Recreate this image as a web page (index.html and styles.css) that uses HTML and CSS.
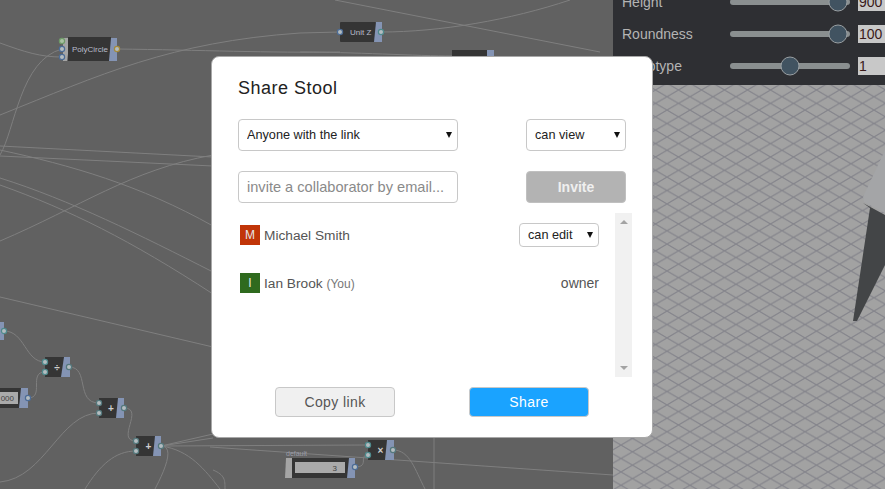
FILE: index.html
```html
<!DOCTYPE html>
<html lang="en">
<head>
<meta charset="utf-8">
<title>Share Stool</title>
<link rel="stylesheet" href="styles.css">
</head>
<body>
<div class="app">
  <main class="graph">
    <svg class="graph-svg" width="613" height="489" viewBox="0 0 613 489">
      <g class="wires">
        <path d="M0 43C25 52 40 57 62 57"/>
        <path d="M0 155C15 130 20 60 62 49"/>
        <path d="M117 49C200 50 270 53 340 52"/>
        <path d="M0 115C100 75 170 42 300 33L340 32"/>
        <path d="M0 146L213 157"/>
        <path d="M0 156L213 166"/>
        <path d="M0 150C70 165 140 185 213 226"/>
        <path d="M0 178C70 200 140 235 213 272"/>
        <path d="M0 185C70 210 130 240 213 294"/>
        <path d="M0 241C80 207 130 170 213 155"/>
        <path d="M381 32C440 32 510 20 570 0"/>
        <path d="M335 0L600 52"/>
        <path d="M300 52C350 52 420 56 452 56"/>
        <path d="M0 297L213 347"/>
        <path d="M4 331C25 331 25 362 45 362"/>
        <path d="M28 398C45 398 28 372 45 372"/>
        <path d="M69 367C90 367 75 403 99 403"/>
        <path d="M124 408C145 408 115 441 136 441"/>
        <path d="M0 482C45 478 60 413 99 413"/>
        <path d="M85 489C100 465 115 451 136 451"/>
        <path d="M161 446L213 434"/>
        <path d="M161 446L213 438"/>
        <path d="M161 446L368 445"/>
        <path d="M161 446C175 446 165 470 155 489"/>
        <path d="M161 446C190 450 205 470 220 489"/>
        <path d="M210 447L613 475"/>
        <path d="M355 467C370 467 358 455 368 455"/>
        <path d="M393 450C410 450 415 470 425 489"/>
        <path d="M434 438V489"/>
        <path d="M213 470C225 475 225 480 225 489"/>
      </g>

      <g class="node">
        <path class="node-in" d="M63 38H70L67 61H63Z"/>
        <rect class="node-body" x="68" y="37" width="43" height="24"/>
        <path class="node-out" d="M111 38H117V61H109Z"/>
        <text class="node-label" x="72" y="52">PolyCircle</text>
        <circle class="port port-green" cx="62" cy="41" r="2.2"/>
        <circle class="port port-blue" cx="62" cy="49" r="2.2"/>
        <circle class="port port-blue" cx="62" cy="57" r="2.2"/>
        <circle class="port port-gold" cx="117" cy="49" r="2.2"/>
      </g>

      <g class="node">
        <rect class="node-body" x="340" y="22" width="36" height="20" rx="1"/>
        <path class="node-out" d="M376 22H382V42H374Z"/>
        <text class="node-label" x="350" y="35">Unit Z</text>
        <circle class="port port-blue" cx="340" cy="32" r="2.2"/>
        <circle class="port port-teal" cx="381" cy="32" r="2.2"/>
      </g>

      <g class="node">
        <rect class="node-body" x="452" y="50" width="36" height="8"/>
        <rect class="node-out" x="487" y="50" width="7" height="8"/>
      </g>

      <g class="node">
        <path class="node-out" d="M0 322H4V340H0Z"/>
        <circle class="port port-teal" cx="4" cy="331" r="2.2"/>
      </g>

      <g class="node">
        <rect class="node-body" x="45" y="357" width="19" height="20"/>
        <path class="node-out" d="M64 357H70V377H61Z"/>
        <text class="node-sign" x="57" y="370.500">÷</text>
        <circle class="port port-teal" cx="45" cy="362" r="2.2"/>
        <circle class="port port-teal" cx="45" cy="372" r="2.2"/>
        <circle class="port port-pale" cx="69" cy="367" r="2.2"/>
      </g>

      <g class="node">
        <rect class="node-body" x="0" y="388" width="21" height="20"/>
        <rect class="node-field" x="0" y="392" width="18" height="12"/>
        <text class="node-value" x="14" y="401" text-anchor="end">000</text>
        <path class="node-out" d="M21 388H28V408H19Z"/>
        <circle class="port port-blue" cx="28" cy="398" r="2.2"/>
      </g>

      <g class="node">
        <rect class="node-body" x="99" y="398" width="19" height="20"/>
        <path class="node-out" d="M118 398H124V418H116Z"/>
        <text class="node-sign" x="111" y="411.500">+</text>
        <circle class="port port-pale" cx="99" cy="403" r="2.2"/>
        <circle class="port port-pale" cx="99" cy="413" r="2.2"/>
        <circle class="port port-pale" cx="124" cy="408" r="2.2"/>
      </g>

      <g class="node">
        <rect class="node-body" x="136" y="436" width="19" height="20"/>
        <path class="node-out" d="M155 436H161V456H153Z"/>
        <text class="node-sign" x="148.500" y="449.500">+</text>
        <circle class="port port-pale" cx="136" cy="441" r="2.2"/>
        <circle class="port port-pale" cx="136" cy="451" r="2.2"/>
        <circle class="port port-pale" cx="161" cy="446" r="2.2"/>
      </g>

      <g class="node">
        <rect class="node-body" x="368" y="440" width="19" height="20"/>
        <path class="node-out" d="M387 440H394V460H385Z"/>
        <text class="node-sign" x="380.500" y="453.500">×</text>
        <circle class="port port-teal" cx="368" cy="445" r="2.2"/>
        <circle class="port port-teal" cx="368" cy="455" r="2.2"/>
        <circle class="port port-pale" cx="393" cy="450" r="2.2"/>
      </g>

      <g class="node">
        <text class="node-caption" x="286" y="456">default</text>
        <path class="node-in" d="M286 458H293L292 478H285Z"/>
        <rect class="node-body" x="292" y="458" width="57" height="20"/>
        <rect class="node-field" x="295" y="462" width="50" height="11"/>
        <text class="node-value" x="337" y="471" text-anchor="end">3</text>
        <path class="node-out" d="M349 458H355V478H347Z"/>
        <circle class="port port-blue" cx="355" cy="467" r="2.2"/>
      </g>
    </svg>
  </main>

  <aside class="side">
    <section class="params">
      <div class="param">
        <span class="param-name">Height</span>
        <div class="track"><span class="thumb" style="left:108px"></span></div>
        <span class="param-value">900</span>
      </div>
      <div class="param">
        <span class="param-name">Roundness</span>
        <div class="track"><span class="thumb" style="left:108px"></span></div>
        <span class="param-value">100</span>
      </div>
      <div class="param">
        <span class="param-name">Prototype</span>
        <div class="track"><span class="thumb" style="left:60px"></span></div>
        <span class="param-value">1</span>
      </div>
    </section>
    <section class="viewport">
      <svg class="viewport-svg" width="272" height="404" viewBox="0 0 272 404">
        <defs>
          <pattern id="floor" x="8" y="11.700" width="23" height="13.400" patternUnits="userSpaceOnUse">
            <path class="floor-line" d="M0 0L23 13.400M23 0L0 13.400"/>
          </pattern>
        </defs>
        <rect class="floor" width="272" height="404"/>
        <rect width="272" height="404" fill="url(#floor)"/>
        <path class="stool-light" d="M272 65L250 112L251 117L272 128Z"/>
        <path class="stool-dark" d="M250 118L272 130V180L244 236H240L257 123Z"/>
      </svg>
    </section>
  </aside>

  <div class="modal">
    <h1 class="modal-title">Share Stool</h1>

    <div class="form-row">
      <div class="select-box select-wide">
        <select class="select">
          <option>Anyone with the link</option>
        </select>
      </div>
      <div class="select-box select-narrow">
        <select class="select">
          <option>can view</option>
        </select>
      </div>
    </div>

    <div class="form-row form-row-invite">
      <input class="email" type="text" placeholder="invite a collaborator by email...">
      <button class="btn btn-invite" type="button">Invite</button>
    </div>

    <div class="people">
      <ul class="people-list">
        <li class="person person-first">
          <span class="avatar avatar-red">M</span>
          <span class="person-name">Michael Smith</span>
          <div class="select-box select-small">
            <select class="select">
              <option>can edit</option>
            </select>
          </div>
        </li>
        <li class="person">
          <span class="avatar avatar-green">I</span>
          <span class="person-name">Ian Brook <small class="you">(You)</small></span>
          <span class="person-role">owner</span>
        </li>
      </ul>
      <div class="scrollbar">
        <span class="arrow-up"></span>
        <span class="arrow-down"></span>
      </div>
    </div>

    <div class="modal-actions">
      <button class="btn btn-copy" type="button">Copy link</button>
      <button class="btn btn-share" type="button">Share</button>
    </div>
  </div>
</div>
</body>
</html>
```

FILE: styles.css
```css
* { box-sizing: border-box; }

html, body {
  margin: 0;
  height: 100%;
  overflow: hidden;
}

body {
  font-family: "Liberation Sans", Arial, sans-serif;
  background: #616161;
}

.app {
  position: relative;
  display: flex;
  width: 885px;
  height: 489px;
  overflow: hidden;
}

/* Node graph */
.graph {
  flex: 0 0 613px;
  background: #616161;
}

.graph-svg { display: block; }

.wires path {
  fill: none;
  stroke: #7f7f7f;
  stroke-width: 1;
}

.node-body { fill: #353535; }
.node-out { fill: #8494b4; }
.node-in { fill: #a5a5a5; }
.node-field { fill: #aaaaaa; }

.node-label {
  font: 8px "Liberation Sans", Arial, sans-serif;
  fill: #b9bccb;
}

.node-sign {
  font: bold 10px "Liberation Sans", Arial, sans-serif;
  fill: #d0d0d0;
  text-anchor: middle;
}

.node-value {
  font: 8px "Liberation Sans", Arial, sans-serif;
  fill: #444444;
}

.node-caption {
  font: 7px "Liberation Sans", Arial, sans-serif;
  fill: #9a9ca8;
}

.port {
  r: 2.6px;
  fill: #b4bcc0;
  stroke-width: 1.2;
}

.port-green { stroke: #6f9a68; fill: #a9c2a3; }
.port-blue { stroke: #4c6c96; }
.port-gold { stroke: #a68b3a; }
.port-teal { stroke: #4f8a8c; }
.port-pale { stroke: #54787c; }

/* Right column */
.side {
  flex: 1 1 0;
  min-width: 0;
  display: flex;
  flex-direction: column;
  overflow: hidden;
}

.params {
  flex: 0 0 85px;
  background: #2e2f33;
  padding: 0 0 10px 9px;
  display: flex;
  flex-direction: column;
  justify-content: flex-end;
  gap: 14px;
  overflow: hidden;
}

.param {
  flex: 0 0 18px;
  display: flex;
  align-items: center;
}

.param-name {
  flex: 0 0 108px;
  font-size: 14px;
  color: #b4b4b4;
}

.track {
  position: relative;
  flex: 0 0 120px;
  height: 6px;
  border-radius: 3px;
  background: #8a8f90;
}

.thumb {
  position: absolute;
  top: 50%;
  width: 19px;
  height: 19px;
  border-radius: 50%;
  background: #415361;
  border: 1px solid #9aa0a3;
  transform: translate(-50%, -50%);
}

.param-value {
  flex: 0 0 40px;
  height: 18px;
  margin-left: 8px;
  padding-left: 1px;
  background: #c8c8c8;
  color: #3a1a1a;
  font-size: 14px;
  line-height: 18px;
}

.viewport {
  flex: 1 1 0;
  min-height: 0;
}

.viewport-svg { display: block; }

.floor { fill: #a2a2a2; }

.floor-line {
  fill: none;
  stroke: #85858c;
  stroke-width: 1.2;
}

.stool-light { fill: #a4a5a7; }
.stool-dark { fill: #434547; }

/* Dialog */
.modal {
  position: absolute;
  left: 211px;
  top: 56px;
  width: 442px;
  height: 382px;
  padding: 0 26px;
  background: #ffffff;
  border: 1px solid #a8a8a8;
  border-radius: 8px;
}

.modal-title {
  margin: 19px 0 19px;
  font-size: 18px;
  font-weight: 400;
  line-height: 24px;
  letter-spacing: 0.5px;
  color: #222222;
}

.form-row {
  display: flex;
  justify-content: space-between;
  width: 388px;
  margin-bottom: 20px;
}

.select-box {
  position: relative;
  height: 32px;
}

.select-box::after {
  content: "";
  position: absolute;
  right: 6px;
  top: 50%;
  margin-top: -3px;
  border-left: 3.5px solid transparent;
  border-right: 3.5px solid transparent;
  border-top: 6px solid #111111;
  pointer-events: none;
}

.select-wide { width: 220px; }
.select-narrow { width: 100px; }
.select-small { width: 80px; height: 24px; }

.select {
  display: block;
  width: 100%;
  height: 100%;
  padding: 0 8px;
  appearance: none;
  -webkit-appearance: none;
  background: #ffffff;
  border: 1px solid #c8c8c8;
  border-radius: 4px;
  font-family: "Liberation Sans", Arial, sans-serif;
  font-size: 12.7px;
  color: #222222;
}

.email {
  width: 220px;
  height: 32px;
  padding: 0 8px;
  border: 1px solid #c8c8c8;
  border-radius: 4px;
  font-family: "Liberation Sans", Arial, sans-serif;
  font-size: 14.6px;
  outline: none;
}

.email::placeholder {
  color: #8a8a8a;
  opacity: 1;
}

.btn {
  height: 32px;
  padding: 0;
  border-radius: 4px;
  font-family: "Liberation Sans", Arial, sans-serif;
  font-size: 14px;
}

.btn-invite {
  width: 100px;
  background: #b3b3b3;
  border: 1px solid #c0c0c0;
  color: #efefef;
  font-weight: 700;
}

.people {
  display: flex;
  height: 164px;
  margin-top: -10px;
  margin-right: -6px;
}

.people-list {
  flex: 1 1 0;
  list-style: none;
  margin: 0;
  padding: 0 16px 0 2px;
}

.person {
  display: flex;
  align-items: center;
  height: 24px;
  margin-top: 24px;
  font-size: 13.7px;
  color: #555555;
}

.person-first { margin-top: 10px; }

.avatar {
  flex: 0 0 20px;
  height: 20px;
  margin-right: 4px;
  color: #e6e6e6;
  font-size: 12px;
  line-height: 20px;
  text-align: center;
}

.avatar-red { background: #c13508; }
.avatar-green { background: #2f6a1e; }

.person-name { flex: 1 1 0; }

.you {
  font-size: 12px;
  color: #777777;
}

.person-role { color: #555555; font-size: 14px; }

.scrollbar {
  flex: 0 0 17px;
  display: flex;
  flex-direction: column;
  justify-content: space-between;
  align-items: center;
  padding: 7px 0;
  background: #f1f1f1;
}

.arrow-up,
.arrow-down {
  width: 0;
  height: 0;
  border-left: 4px solid transparent;
  border-right: 4px solid transparent;
}

.arrow-up { border-bottom: 4px solid #a3a3a3; }
.arrow-down { border-top: 4px solid #a3a3a3; }

.modal-actions {
  display: flex;
  justify-content: space-between;
  width: 314px;
  margin: 10px 0 0 37px;
}

.btn-copy,
.btn-share {
  width: 120px;
  height: 30px;
  letter-spacing: 0.4px;
}

.btn-copy {
  background: #f0f0f0;
  border: 1px solid #c8c8c8;
  color: #555555;
}

.btn-share {
  background: #1aa3ff;
  border: 1px solid #c8c8c8;
  color: #ffffff;
}
```
